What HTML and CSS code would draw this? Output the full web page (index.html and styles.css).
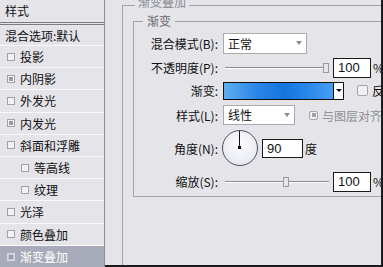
FILE: index.html
```html
<!DOCTYPE html>
<html lang="zh">
  <head>
    <meta charset="UTF-8" />
    <title>图层样式 - 渐变叠加</title>
    <link rel="stylesheet" href="styles.css">
  </head>
  <body>
    <div class="window">
      <aside class="style-list">
        <div class="list-head">样式</div>
        <div class="list-item blend">混合选项:默认</div>
        <div class="list-item"><span class="box"></span>投影</div>
        <div class="list-item"><span class="box on"></span>内阴影</div>
        <div class="list-item"><span class="box"></span>外发光</div>
        <div class="list-item"><span class="box on"></span>内发光</div>
        <div class="list-item"><span class="box"></span>斜面和浮雕</div>
        <div class="list-item sub"><span class="box"></span>等高线</div>
        <div class="list-item sub"><span class="box"></span>纹理</div>
        <div class="list-item"><span class="box"></span>光泽</div>
        <div class="list-item"><span class="box"></span>颜色叠加</div>
        <div class="list-item active"><span class="box on"></span>渐变叠加</div>
      </aside>

      <main class="panel">
        <fieldset class="group outer">
          <legend>渐变叠加</legend>
          <fieldset class="group inner">
            <legend>渐变</legend>
            <div class="form">
              <div class="row r-mode">
                <label>混合模式(B):</label>
                <div class="select mode">正常<span class="arrow"></span></div>
              </div>

              <div class="row r-opacity">
                <label>不透明度(P):</label>
                <div class="slider"><span class="thumb" style="left: 100px"></span></div>
                <div class="num">100</div>
                <span class="unit">%</span>
              </div>

              <div class="row r-gradient">
                <label>渐变:</label>
                <div class="gradient">
                  <div class="swatch"></div>
                  <div class="drop"><span class="tri"></span></div>
                </div>
                <span class="check"></span>
                <span class="opt">反向</span>
              </div>

              <div class="row r-style">
                <label>样式(L):</label>
                <div class="select linear">线性<span class="arrow"></span></div>
                <span class="check small on"></span>
                <span class="opt disabled">与图层对齐</span>
              </div>

              <div class="row r-angle">
                <label>角度(N):</label>
                <div class="dial"><span class="needle"></span><span class="dot"></span></div>
                <div class="num angle">90</div>
                <span class="unit">度</span>
              </div>

              <div class="row r-scale">
                <label>缩放(S):</label>
                <div class="slider"><span class="thumb" style="left: 60px"></span></div>
                <div class="num">100</div>
                <span class="unit">%</span>
              </div>
            </div>
          </fieldset>
        </fieldset>
      </main>
    </div>
  </body>
</html>
```

FILE: styles.css
```css
* {
  margin: 0;
  padding: 0;
  box-sizing: border-box;
}

body {
  width: 383px;
  height: 267px;
  overflow: hidden;
  font-family: "Noto Sans CJK SC", "Liberation Sans", sans-serif;
  font-size: 12px;
  color: #111;
  background: #e4e4e9;
}

.window {
  display: flex;
  height: 267px;
}

/* Left list of layer styles */
.style-list {
  flex: 0 0 105px;
  background: #e4e4e9;
  border-right: 1px solid #8c8c90;
}

.list-head {
  height: 25px;
  line-height: 22px;
  padding-left: 5px;
  border-bottom: 3px double #7c7c80;
}

.list-item {
  height: 22.2px;
  display: flex;
  align-items: center;
  border-bottom: 1px solid #fafafc;
}

.list-item.blend {
  height: 21px;
  padding-left: 5px;
}

.box {
  width: 8px;
  height: 8px;
  margin: 0 5px 0 7px;
  border: 1px solid #a2a2a6;
  background: #f2f2f4;
  display: flex;
  align-items: center;
  justify-content: center;
}

.box.on::after {
  content: "";
  width: 4px;
  height: 4px;
  background: #9a9aa0;
}

.list-item.sub .box {
  margin-left: 21px;
}

.list-item.active {
  background: #a7aab8;
  color: #fff;
  border-bottom: none;
}

.list-item.active .box {
  background: #c6c8d2;
  border-color: #d8d9e0;
}

/* Right options panel */
.panel {
  flex: 1;
  overflow: hidden;
  padding-left: 17px;
  border-right: 2px solid #1c1c1e;
  border-bottom: 2px solid #1c1c1e;
}

.group {
  border: 1px solid #a4a4a8;
  flex-shrink: 0;
}

.group legend {
  line-height: 14px;
  color: #6a6a70;
}

.outer {
  width: 300px;
  height: 300px;
  margin-top: -4px;
  padding: 0 0 0 10px;
}

/* taller legend box so the frame line sits below the text middle */
.outer > legend {
  margin-left: 2px;
  padding: 0 3px 6px;
  line-height: 12px;
  color: #8a8a90;
}

.inner {
  width: 300px;
  margin-top: 0;
  padding: 3px 0 0 0;
}

.inner > legend {
  margin-left: 9px;
  padding: 0 4px;
}

.form {
  display: flex;
  flex-direction: column;
}

.row {
  display: flex;
  align-items: center;
}

.row label {
  width: 84px;
  margin-right: 5px;
  text-align: right;
}

.r-mode { height: 24px; }
.r-opacity { height: 25px; }
.r-gradient { height: 21px; }
.r-style { height: 28px; }
.r-angle { height: 38px; }
.r-scale { height: 29px; }

.select {
  position: relative;
  height: 21px;
  line-height: 19px;
  padding-left: 4px;
  background: #fff;
  border: 1px solid #a9a9b0;
}

.select.mode {
  width: 84px;
}

.select.linear {
  width: 72px;
  height: 20px;
  line-height: 18px;
  margin-right: 14px;
}

.arrow {
  position: absolute;
  right: 4px;
  top: 7px;
  border-left: 3px solid transparent;
  border-right: 3px solid transparent;
  border-top: 4px solid #8c8c92;
}

.slider {
  position: relative;
  width: 106px;
  height: 10px;
  margin-right: 4px;
}

.slider::before {
  content: "";
  position: absolute;
  left: 2px;
  right: 0;
  top: 4px;
  border-top: 1px solid #8c8c90;
  border-bottom: 1px solid #fff;
}

.thumb {
  position: absolute;
  top: 0;
  width: 6px;
  height: 10px;
  background: #e6e6ea;
  border: 1px solid #9a9aa0;
}

.num {
  width: 38px;
  height: 20px;
  line-height: 18px;
  padding-left: 4px;
  background: #fff;
  border: 1px solid #1a1a1a;
  font-family: "Liberation Sans", sans-serif;
  font-size: 13px;
}

.unit {
  margin-left: 2px;
}

.gradient {
  display: flex;
  width: 121px;
  height: 18px;
  margin-right: 13px;
  border: 1px solid #111;
}

.swatch {
  flex: 1;
  background: linear-gradient(to right, #60aef2, #2a86e6 30%, #1574de 55%, #2b8aec 80%, #4a9ef2);
}

.drop {
  width: 10px;
  border-left: 1px solid #111;
  background: #fff;
  display: flex;
  align-items: center;
  justify-content: center;
}

.tri {
  border-left: 3px solid transparent;
  border-right: 3px solid transparent;
  border-top: 3px solid #111;
}

.check {
  width: 11px;
  height: 11px;
  margin-right: 4px;
  border: 1px solid #a4a4aa;
  border-radius: 2px;
  background: #f0f0f3;
  display: flex;
  align-items: center;
  justify-content: center;
}

.check.small {
  width: 9px;
  height: 9px;
  margin-right: 4px;
}

.check.on::after {
  content: "";
  width: 4px;
  height: 4px;
  background: #a2a2aa;
}

.opt {
  white-space: nowrap;
}

.opt.disabled {
  color: #8e8e94;
}

.dial {
  position: relative;
  width: 36px;
  height: 36px;
  margin: 0 4px 0 -1px;
  border: 1.5px solid #4c4f60;
  border-radius: 50%;
  background: radial-gradient(circle at 50% 40%, #fdfdfe, #eceef4 60%, #d6d8e2);
}

.needle {
  position: absolute;
  left: 16px;
  top: 0;
  width: 1px;
  height: 17px;
  background: #111;
}

.dot {
  position: absolute;
  left: 15px;
  top: 15px;
  width: 3px;
  height: 3px;
  background: #111;
}

.num.angle {
  width: 41px;
  height: 19px;
  line-height: 17px;
}
```
